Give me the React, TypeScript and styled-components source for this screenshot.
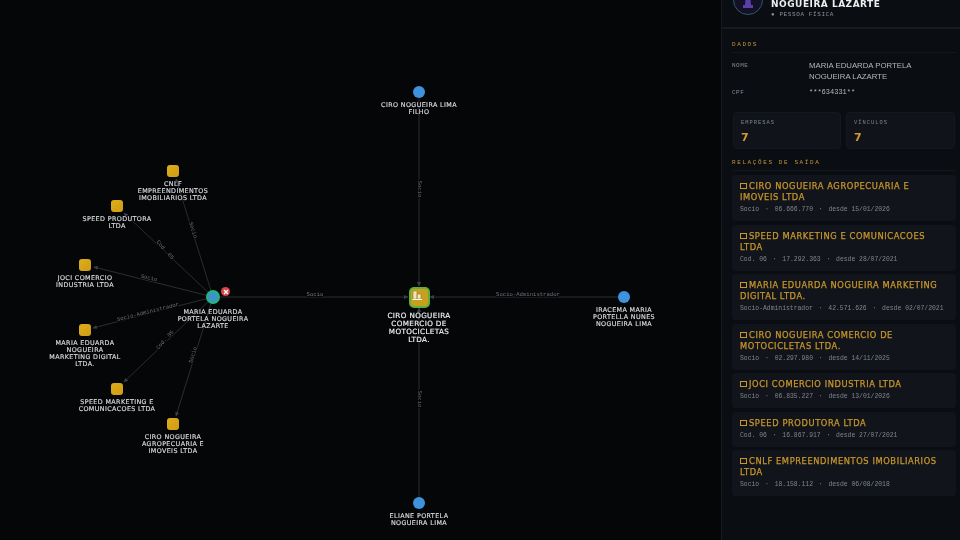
import React from 'react';
import styled, { createGlobalStyle } from 'styled-components';

const Global = createGlobalStyle`
  html, body { margin: 0; padding: 0; background: #050608; }
  #root { width: 960px; height: 540px; overflow: hidden; }
`;

const WIDE = `"DejaVu Sans", "Liberation Sans", sans-serif`;
const MONO = `"Liberation Mono", "DejaVu Sans Mono", monospace`;

const Page = styled.div`
  display: flex;
  width: 960px;
  height: 540px;
  overflow: hidden;
  background: #050608;
  filter: blur(0.35px);
`;
const Canvas = styled.div`
  position: relative;
  flex: 1;
  height: 540px;
`;
const EdgeLayer = styled.svg`
  position: absolute;
  inset: 0;
`;
const NodeWrap = styled.div<{ $x: number; $y: number }>`
  position: absolute;
  left: ${p => p.$x}px;
  top: ${p => p.$y}px;
  width: 0;
  height: 0;
  display: flex;
  justify-content: center;
`;
const CompanyDot = styled.div`
  position: absolute;
  top: -6px;
  width: 12px;
  height: 12px;
  border-radius: 3px;
  background: linear-gradient(135deg, #e0ad1c, #cf9c14);
`;
const PersonDot = styled.div`
  position: absolute;
  top: -6px;
  width: 12px;
  height: 12px;
  border-radius: 50%;
  background: #3f92dc;
`;
const SelectedPerson = styled.div`
  position: absolute;
  top: -7px;
  width: 14px;
  height: 14px;
  box-sizing: border-box;
  border-radius: 50%;
  border: 2px solid #22b87a;
  background: #3c94c8;
`;
const CloseBadge = styled.div`
  position: absolute;
  left: 8px;
  top: -10px;
  width: 9px;
  height: 9px;
  border-radius: 50%;
  background: #d8434a;
  display: flex;
  align-items: center;
  justify-content: center;
`;
const CenterDot = styled.div`
  position: absolute;
  top: -10.5px;
  width: 21px;
  height: 21px;
  box-sizing: border-box;
  border-radius: 5px;
  border: 2px solid #5cb03e;
  background: #c9a01e;
  display: flex;
  align-items: flex-start;
  justify-content: flex-start;
  padding: 1px;
`;
const NodeLabel = styled.div<{ $top: number; $w: number; $bright?: boolean }>`
  position: absolute;
  top: ${p => p.$top}px;
  width: ${p => p.$w}px;
  text-align: center;
  font-family: ${WIDE};
  font-size: ${p => (p.$bright ? 7.2 : 6.4)}px;
  line-height: ${p => (p.$bright ? 8 : 7)}px;
  letter-spacing: 0.37px;
  color: ${p => (p.$bright ? '#f4f5f6' : '#dcdee0')};
  -webkit-text-stroke: 0.15px currentColor;
  white-space: pre-line;
`;

const Panel = styled.aside`
  width: 239px;
  height: 540px;
  box-sizing: border-box;
  background: #0a0d12;
  border-left: 1px solid #171b20;
  display: flex;
  flex-direction: column;
  overflow: hidden;
`;
const Header = styled.header`
  flex: none;
  margin-top: -28px;
  height: 55px;
  display: flex;
  align-items: center;
  gap: 8px;
  padding: 0 11px;
  border-bottom: 2px solid #171b20;
`;
const Avatar = styled.div`
  flex: none;
  width: 30px;
  height: 30px;
  margin-top: 1px;
  box-sizing: border-box;
  border-radius: 50%;
  border: 1px solid #2e5a6c;
  background: #141026;
  display: flex;
  align-items: center;
  justify-content: center;
`;
const HeadText = styled.div`
  display: flex;
  flex-direction: column;
  margin-top: 6px;
`;
const Title = styled.div`
  font-family: ${WIDE};
  font-weight: 700;
  font-size: 9px;
  line-height: 12px;
  letter-spacing: 0.5px;
  color: #eceef0;
  white-space: nowrap;
`;
const Sub = styled.div`
  font-family: ${MONO};
  font-size: 6px;
  line-height: 10px;
  letter-spacing: 0.6px;
  color: #8b9096;
`;
const Section = styled.section`
  padding: 0 4px 0 10px;
`;
const SectionTitle = styled.div<{ $top: number }>`
  margin-top: ${p => p.$top}px;
  padding-bottom: 4px;
  border-bottom: 1px solid #14181d;
  font-family: ${MONO};
  font-size: 6px;
  line-height: 7px;
  letter-spacing: 1.6px;
  color: #c4933a;
`;
const DataGrid = styled.div`
  display: grid;
  grid-template-columns: 77px 1fr;
  row-gap: 5px;
  margin-top: 7px;
`;
const DataKey = styled.div`
  font-family: ${MONO};
  font-size: 6px;
  line-height: 11px;
  letter-spacing: 0.5px;
  color: #878c92;
`;
const DataValue = styled.div<{ $mono?: boolean }>`
  font-family: ${p => (p.$mono ? MONO : `"Liberation Sans", sans-serif`)};
  font-size: ${p => (p.$mono ? 7 : 7.8)}px;
  line-height: 11px;
  color: #b4b8bc;
  max-width: 125px;
`;
const Stats = styled.div`
  display: grid;
  grid-template-columns: 108px 109px;
  gap: 5px;
  margin: 14px 0 0 1px;
`;
const Stat = styled.div`
  height: 37px;
  box-sizing: border-box;
  padding: 7px 7px;
  border-radius: 4px;
  background: #10141a;
  border: 1px solid #141920;
`;
const StatLabel = styled.div`
  font-family: ${MONO};
  font-size: 5.4px;
  line-height: 7px;
  letter-spacing: 1px;
  color: #7f858b;
`;
const StatValue = styled.div`
  margin-top: 4px;
  font-family: ${WIDE};
  font-weight: 700;
  font-size: 11px;
  line-height: 13px;
  color: #d09a2c;
`;
const Cards = styled.div`
  display: flex;
  flex-direction: column;
  gap: 3.5px;
  margin-top: 4px;
`;
const Card = styled.div`
  box-sizing: border-box;
  padding: 6px 8px 6px;
  border-radius: 4px;
  background: #11151b;
`;
const CardTitle = styled.div`
  font-family: ${WIDE};
  font-weight: 400;
  font-size: 8.3px;
  line-height: 11px;
  letter-spacing: 0.6px;
  color: #c9962a;
  -webkit-text-stroke: 0.25px #c9962a;
`;
const Box = styled.span`
  display: inline-block;
  width: 7px;
  height: 6px;
  box-sizing: border-box;
  border: 1px solid #c9962a;
  margin-right: 2px;
`;
const Meta = styled.div`
  display: flex;
  gap: 5.8px;
  margin-top: 2px;
  font-family: ${MONO};
  font-size: 6.4px;
  line-height: 10px;
  color: #80868c;
  white-space: nowrap;
`;

type Company = { x: number; y: number; label: string; w: number; ex: number; ey: number };
const companies: Company[] = [
  { x: 173, y: 171, label: 'CNLF\nEMPREENDIMENTOS\nIMOBILIARIOS LTDA', w: 100, ex: 176, ey: 179 },
  { x: 117, y: 206, label: 'SPEED PRODUTORA\nLTDA', w: 100, ex: 124, ey: 213 },
  { x: 85, y: 265, label: 'JOCI COMERCIO\nINDUSTRIA LTDA', w: 100, ex: 94, ey: 267 },
  { x: 85, y: 330, label: 'MARIA EDUARDA\nNOGUEIRA\nMARKETING DIGITAL\nLTDA.', w: 100, ex: 93, ey: 328 },
  { x: 117, y: 389, label: 'SPEED MARKETING E\nCOMUNICACOES LTDA', w: 100, ex: 124, ey: 382 },
  { x: 173, y: 424, label: 'CIRO NOGUEIRA\nAGROPECUARIA E\nIMOVEIS LTDA', w: 100, ex: 176, ey: 416 },
];
const people = [
  { x: 419, y: 92, label: 'CIRO NOGUEIRA LIMA\nFILHO', w: 100 },
  { x: 624, y: 297, label: 'IRACEMA MARIA\nPORTELLA NUNES\nNOGUEIRA LIMA', w: 100 },
  { x: 419, y: 503, label: 'ELIANE PORTELA\nNOGUEIRA LIMA', w: 100 },
];
const edgeLabels = [
  { x: 315, y: 295, r: 0, t: 'Socio' },
  { x: 528, y: 295, r: 0, t: 'Socio-Administrador' },
  { x: 419, y: 189, r: 90, t: 'Socio' },
  { x: 419, y: 399, r: 90, t: 'Socio' },
  { x: 193, y: 230, r: 73, t: 'Socio' },
  { x: 165, y: 250, r: 49, t: 'Cod. 05' },
  { x: 149, y: 278, r: 13, t: 'Socio' },
  { x: 148, y: 312, r: -14, t: 'Socio-Administrador' },
  { x: 165, y: 340, r: -49, t: 'Cod. 05' },
  { x: 193, y: 355, r: -73, t: 'Socio' },
];
const relations = [
  { t: 'CIRO NOGUEIRA AGROPECUARIA E IMOVEIS LTDA', q: 'Socio', c: '06.666.770', d: '15/01/2026' },
  { t: 'SPEED MARKETING E COMUNICACOES LTDA', q: 'Cod. 06', c: '17.292.363', d: '28/07/2021' },
  { t: 'MARIA EDUARDA NOGUEIRA MARKETING DIGITAL LTDA.', q: 'Socio-Administrador', c: '42.571.626', d: '02/07/2021' },
  { t: 'CIRO NOGUEIRA COMERCIO DE MOTOCICLETAS LTDA.', q: 'Socio', c: '02.297.980', d: '14/11/2025' },
  { t: 'JOCI COMERCIO INDUSTRIA LTDA', q: 'Socio', c: '06.835.227', d: '13/01/2026' },
  { t: 'SPEED PRODUTORA LTDA', q: 'Cod. 06', c: '16.867.917', d: '27/07/2021' },
  { t: 'CNLF EMPREENDIMENTOS IMOBILIARIOS LTDA', q: 'Socio', c: '18.158.112', d: '06/08/2018' },
];

const edgeColor = '#2a2d32';

export default function App() {
  return (
    <Page>
      <Global />
      <Canvas>
        <EdgeLayer width={721} height={540} viewBox="0 0 721 540">
          <defs>
            <marker id="arrow" markerWidth="5" markerHeight="5" refX="4" refY="2.5" orient="auto">
              <path d="M0 0.5 L4.5 2.5 L0 4.5 Z" fill="#3c4046" />
            </marker>
          </defs>
          <g stroke={edgeColor} strokeWidth={1} fill="none">
            {companies.map(c => (
              <line key={c.label} x1={213} y1={297} x2={c.ex} y2={c.ey} markerEnd="url(#arrow)" />
            ))}
            <line x1={220} y1={297} x2={408} y2={297} markerEnd="url(#arrow)" />
            <line x1={618} y1={297} x2={430} y2={297} markerEnd="url(#arrow)" />
            <line x1={419} y1={98} x2={419} y2={286} markerEnd="url(#arrow)" />
            <line x1={419} y1={497} x2={419} y2={308} markerEnd="url(#arrow)" />
          </g>
          {edgeLabels.map(l => (
            <text
              key={`${l.x}-${l.y}`}
              x={l.x}
              y={l.y}
              transform={`rotate(${l.r} ${l.x} ${l.y})`}
              textAnchor="middle"
              fontFamily="Liberation Mono, monospace"
              fontSize={5.6}
              fill="#6c7177"
              dominantBaseline="middle"
              style={{ paintOrder: 'stroke' }}
              stroke="#050608"
              strokeWidth={2}
            >
              {l.t}
            </text>
          ))}
        </EdgeLayer>

        {companies.map(c => (
          <NodeWrap key={c.label} $x={c.x} $y={c.y}>
            <CompanyDot />
            <NodeLabel $top={10} $w={c.w}>{c.label}</NodeLabel>
          </NodeWrap>
        ))}
        {people.map(p => (
          <NodeWrap key={p.label} $x={p.x} $y={p.y}>
            <PersonDot />
            <NodeLabel $top={10} $w={p.w}>{p.label}</NodeLabel>
          </NodeWrap>
        ))}
        <NodeWrap $x={213} $y={297}>
          <SelectedPerson />
          <CloseBadge>
            <svg width="6" height="6" viewBox="0 0 6 6">
              <path d="M1 1 L5 5 M5 1 L1 5" stroke="#fff" strokeWidth="1.3" />
            </svg>
          </CloseBadge>
          <NodeLabel $top={12} $w={100}>{'MARIA EDUARDA\nPORTELA NOGUEIRA\nLAZARTE'}</NodeLabel>
        </NodeWrap>
        <NodeWrap $x={419} $y={297}>
          <CenterDot>
            <svg width="11" height="11" viewBox="0 0 11 11">
              <path d="M1 1 H5 V9 H1 Z M5 4 H9 V9 H5 Z" fill="#efe6b8" stroke="#8a6a10" strokeWidth="0.5" />
              <path d="M0.5 9.5 H10" stroke="#fff" strokeWidth="1" />
            </svg>
          </CenterDot>
          <NodeLabel $top={15} $w={100} $bright>{'CIRO NOGUEIRA\nCOMERCIO DE\nMOTOCICLETAS\nLTDA.'}</NodeLabel>
        </NodeWrap>
      </Canvas>

      <Panel>
        <Header>
          <Avatar>
            <svg width="14" height="16" viewBox="0 0 14 16">
              <circle cx="7" cy="4" r="3.2" fill="#5a3fa6" />
              <path d="M4.5 7 H9.5 L10 13 H12 V16 H2 V13 H4 Z" fill="#5a3fa6" />
            </svg>
          </Avatar>
          <HeadText>
            <Title>MARIA EDUARDA PORTELA</Title>
            <Title>NOGUEIRA LAZARTE</Title>
            <Sub>● PESSOA FÍSICA</Sub>
          </HeadText>
        </Header>
        <Section>
          <SectionTitle $top={12}>DADOS</SectionTitle>
          <DataGrid>
            <DataKey>NOME</DataKey>
            <DataValue>MARIA EDUARDA PORTELA NOGUEIRA LAZARTE</DataValue>
            <DataKey>CPF</DataKey>
            <DataValue $mono>***634331**</DataValue>
          </DataGrid>
          <Stats>
            <Stat>
              <StatLabel>EMPRESAS</StatLabel>
              <StatValue>7</StatValue>
            </Stat>
            <Stat>
              <StatLabel>VÍNCULOS</StatLabel>
              <StatValue>7</StatValue>
            </Stat>
          </Stats>
          <SectionTitle $top={10}>RELAÇÕES DE SAÍDA</SectionTitle>
          <Cards>
            {relations.map(r => (
              <Card key={r.t}>
                <CardTitle><Box />{r.t}</CardTitle>
                <Meta>
                  <span>{r.q}</span>
                  <span>·</span>
                  <span>{r.c}</span>
                  <span>·</span>
                  <span>desde {r.d}</span>
                </Meta>
              </Card>
            ))}
          </Cards>
        </Section>
      </Panel>
    </Page>
  );
}
